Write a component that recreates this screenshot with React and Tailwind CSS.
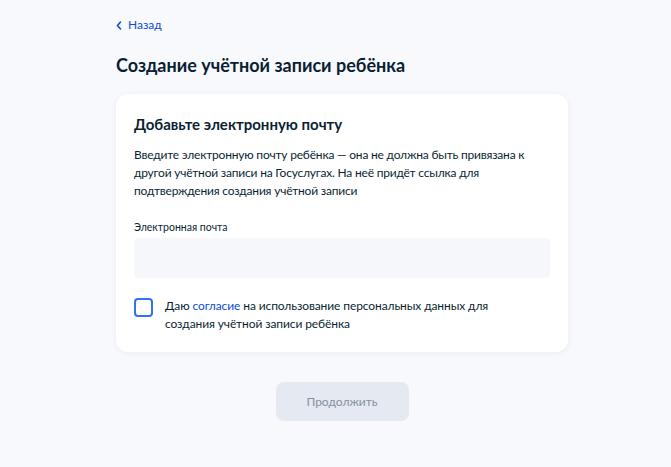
const App = () => {
  return (
    <div
      className="min-h-screen w-full bg-[#f8f9fc] text-[#0b1f33]"
      style={{ fontFamily: "Lato, 'Noto Sans', sans-serif" }}
    >
      <div className="w-[452px] ml-[116px] pt-[17px] pb-[45px]">
        <a href="#" className="flex items-center gap-[6px] text-[12px] leading-[16px] text-[#0d4cd3]">
          <svg width="6" height="9" viewBox="0 0 6 9" fill="none">
            <path d="M4.5 1L1.5 4.5L4.5 8" stroke="#0d4cd3" strokeWidth="1.6" strokeLinecap="round" strokeLinejoin="round" />
          </svg>
          Назад
        </a>

        <h1 className="mt-[20px] text-[18px] leading-[24px] font-bold">
          Создание учётной записи ребёнка
        </h1>

        <div className="mt-[17px] bg-white rounded-[12px] shadow-[0_1px_6px_rgba(11,31,51,0.06)] px-[18px] pt-[20px] pb-[19px]">
          <h2 className="text-[15px] leading-[20px] font-bold">Добавьте электронную почту</h2>
          <p className="mt-[12px] text-[12px] leading-[18px] tracking-[-0.2px]">
            Введите электронную почту ребёнка — она не должна быть привязана к другой учётной записи на Госуслугах. На неё придёт ссылка для подтверждения создания учётной записи
          </p>

          <label className="block mt-[20px] text-[10.5px] leading-[14px] text-[#0b1f33]">
            Электронная почта
          </label>
          <input
            type="email"
            className="mt-[4px] w-full h-[40px] rounded-[4px] bg-[#f5f7fa] px-3 text-[12px] outline-none"
          />

          <div className="mt-[19px] flex items-start gap-[12px]">
            <span className="mt-[1px] w-[19px] h-[19px] shrink-0 rounded-[4px] border-2 border-[#3171f5] bg-white"></span>
            <p className="max-w-[345px] text-[12px] leading-[18px] tracking-[-0.1px]">
              Даю <a href="#" className="text-[#0d4cd3]">согласие</a> на использование персональных данных для создания учётной записи ребёнка
            </p>
          </div>
        </div>

        <div className="mt-[30px] flex justify-center">
          <button className="w-[133px] h-[39px] rounded-[8px] bg-[#e4e9f2] text-[12px] text-[#86909c]">
            Продолжить
          </button>
        </div>
      </div>
    </div>
  );
};

export default App;
